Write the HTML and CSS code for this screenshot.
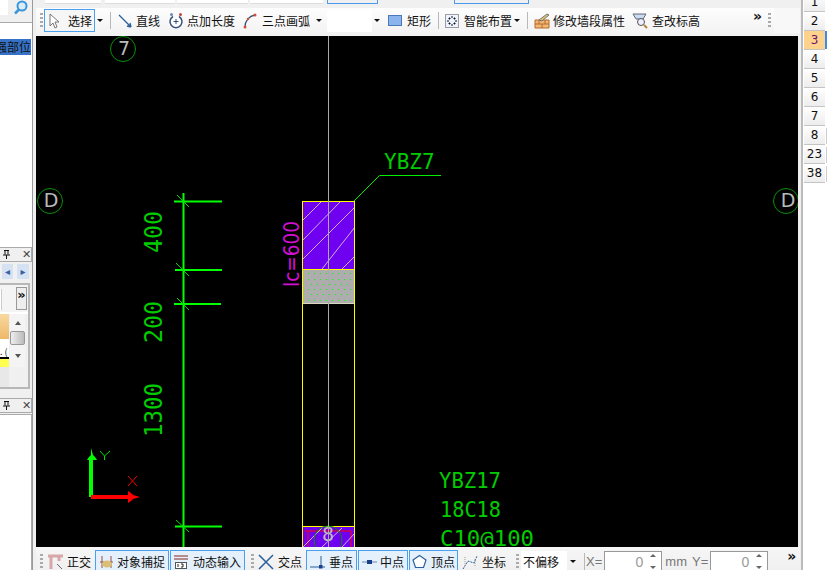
FILE: index.html
```html
<!DOCTYPE html>
<html lang="zh-CN">
<head>
<meta charset="utf-8">
<title>CAD</title>
<link rel="stylesheet" href="styles.css">
</head>
<body>
<div class="app">
  <aside class="left">
    <div class="search"><svg width="15" height="15" viewBox="0 0 15 15"><circle cx="9" cy="6" r="4.500" fill="#d8ecfa" stroke="#3a96d8" stroke-width="2"/><path d="M6 9.500 2 13.500" stroke="#3a96d8" stroke-width="2.500"/></svg></div>
    <div class="tree"><div class="tree-sel">强部位</div></div>
    <div class="panel-head"><svg class="pin" width="7" height="9" viewBox="0 0 7 9"><path d="M1 .5h5M2 .5v4M5 .5v4M0 5h7M3.500 5v4" stroke="#111" fill="none"/></svg><span class="close">✕</span></div>
    <div class="nav"><span class="nav-btn">◂</span><span class="nav-btn wide">▸</span></div>
    <div class="prop">
      <div class="prop-top"><span class="prop-field"></span><span class="prop-more">»</span></div>
      <div class="prop-body">
        <div class="swatches"><div class="sw-gold"></div><div class="sw-text">. (</div><div class="sw-black"></div><div class="sw-yellow"></div><div class="sw-rest"></div></div>
        <div class="scroll"><span class="sc-up"></span><span class="sc-thumb"></span><span class="sc-down"></span></div>
      </div>
    </div>
    <div class="panel-head second"><svg class="pin" width="7" height="9" viewBox="0 0 7 9"><path d="M1 .5h5M2 .5v4M5 .5v4M0 5h7M3.500 5v4" stroke="#111" fill="none"/></svg><span class="close">✕</span></div>
    <div class="left-rest"></div>
  </aside>

  <main class="center">
    <div class="strip">
      <span class="box w56"></span><span class="box w70 after"></span><span class="box w71"></span><span class="box w73"></span><span class="box blue w50"></span><span class="box-gap"></span><span class="box blue w75"></span>
    </div>
    <div class="toolbar">
      <span class="grip"></span>
      <span class="btn on sel"><svg width="14" height="16" viewBox="0 0 14 16"><path d="M2 1v12l3-3 2 5 2-1-2-5h4z" fill="#fff" stroke="#777"/></svg>选择</span>
      <span class="caret c1"></span>
      <span class="sep s1"></span>
      <span class="tool m7 g4w"><svg width="14" height="14" viewBox="0 0 14 14"><path d="M1 1l12 12M13 13l-4-1M13 13l-1-4" stroke="#2a5f9a" stroke-width="1.300" fill="none"/></svg>直线</span>
      <span class="tool m8 g3w"><svg width="16" height="17" viewBox="0 0 16 17"><path d="M5 4.500a6 6 0 1 0 6 0" fill="#fff" stroke="#34507a" stroke-width="1.500"/><path d="M8 7v5M5.500 9.500h5" stroke="#34507a"/><circle cx="3.500" cy="2.500" r="1.500" fill="#6a8ab0"/><circle cx="12.500" cy="2.500" r="1.500" fill="#c0483c"/></svg>点加长度</span>
      <span class="tool m8 g4w"><svg width="15" height="16" viewBox="0 0 15 16"><path d="M2 14C2 8 6 3 12 2" stroke="#34507a" stroke-width="1.300" fill="none"/><circle cx="2" cy="14" r="1.500" fill="#d0503c"/><circle cx="12" cy="2" r="1.500" fill="#d0503c"/><circle cx="5" cy="6" r="1.200" fill="#d0503c"/></svg>三点画弧</span>
      <span class="caret c2"></span>
      <span class="combo top-combo"></span>
      <span class="caret c3"></span>
      <span class="tool m8"><svg width="14" height="11" viewBox="0 0 14 11"><rect x=".5" y=".5" width="13" height="10" fill="#8ab4ec" stroke="#4a78b8"/></svg>矩形</span>
      <span class="sep s1"></span>
      <span class="tool m6"><svg width="14" height="14" viewBox="0 0 14 14"><rect x=".5" y=".5" width="13" height="13" fill="#eef4ff" stroke="#444" stroke-dasharray="1 1"/><path d="M7 2v2M7 10v2M2 7h2M10 7h2M4 4h1v1H4zM9 4h1v1H9zM4 9h1v1H4zM9 9h1v1H9z" stroke="#111"/></svg>智能布置</span>
      <span class="caret c4"></span>
      <span class="sep s1"></span>
      <span class="tool m6 g3w"><svg width="16" height="17" viewBox="0 0 16 17"><path d="M1 8h14v8H1z" fill="#f0b878" stroke="#b86a28"/><path d="M1 12h14M5 8v4M11 8v4M8 12v4" stroke="#b86a28"/><path d="M5 8l8-6 2 1-7 6z" fill="#dcc070" stroke="#777"/></svg>修改墙段属性</span>
      <span class="tool m7 g4w"><svg width="16" height="16" viewBox="0 0 16 16"><path d="M1 1h13l-3 5H4z" fill="#c8dcf2" stroke="#667"/><circle cx="9" cy="9" r="3.500" fill="#eef" stroke="#555"/><path d="M12 12l3 3" stroke="#b08a30" stroke-width="2"/></svg>查改标高</span>
      <span class="more m-top">»</span>
      <span class="grip g2"></span>
      <span class="tb-tail"></span>
    </div>
    <div class="canvas">
      <svg class="cad" width="762" height="511" viewBox="36 36 762 511">
        <defs>
          <clipPath id="c1"><rect x="303" y="202" width="51" height="67"/></clipPath>
          <clipPath id="c2"><rect x="303" y="528" width="51" height="20"/></clipPath>
        </defs>
        <rect x="303" y="201.500" width="51" height="68" fill="#7000f0"/>
        <g clip-path="url(#c1)" stroke="#e0e0e0" stroke-width=".8">
          <path d="M303 220 321 202M303 240 340 202M303 259 355 207M322 269 355 227M342 269 355 256"/>
        </g>
        <rect x="303" y="270" width="51" height="33" fill="#adadad"/>
        <path d="M308 273.500h43M308 279.500h43M311 284.500h40M308 289.500h43M311 294.500h40M308 300.500h43" stroke="#0f0" stroke-width="1" stroke-dasharray="1 5"/>
        <path d="M303 303.500H354" stroke="#d8d8c0"/>
        <path d="M302.500 201.500H354.500M302.500 269.500H354.500M302.500 526.500H354.500M302.500 201V547M354.500 201V547" stroke="#ff0" fill="none"/>
        <rect x="303" y="527" width="51" height="20" fill="#7000f0"/>
        <path d="M305 531h46v16M308 547v-16" stroke="#f00" fill="none"/>
        <g clip-path="url(#c2)" stroke="#e0e0e0" stroke-width=".8"><path d="M303 547 322 528M322 547 342 528M342 547 355 533"/></g>
        <circle cx="328" cy="540" r="14" fill="none" stroke="#0a8a0a"/>
        <text class="axis" x="328" y="541" text-anchor="middle" font-size="17" fill="#a8c060">8</text>
        <path d="M328.500 36V547" stroke="#aaa"/>
        <path d="M354 201 379.500 175.500H441" stroke="#0e0" fill="none"/>
        <text class="lab" x="384" y="169">YBZ7</text>
        <text class="pink" transform="translate(299 287) rotate(-90)" textLength="66" lengthAdjust="spacingAndGlyphs">lc=600</text>
        <path d="M183.500 193V547" stroke="#0f0" stroke-width="2"/>
        <path d="M174 201.500H222M175 270H222M174 304H221M175 526.500H222" stroke="#0f0" stroke-width="2"/>
        <path d="M177 195 189 207M176 263 189 276M177 298 189 310M176 520 189 532" stroke="#0d0"/>
        <text class="dim" transform="translate(162 253) rotate(-90)" textLength="42" lengthAdjust="spacingAndGlyphs">400</text>
        <text class="dim" transform="translate(162 343) rotate(-90)" textLength="42" lengthAdjust="spacingAndGlyphs">200</text>
        <text class="dim" transform="translate(162 437) rotate(-90)" textLength="54" lengthAdjust="spacingAndGlyphs">1300</text>
        <circle cx="123" cy="49" r="12.500" fill="none" stroke="#0a900a"/>
        <text class="axis" x="124" y="55" text-anchor="middle">7</text>
        <circle cx="50" cy="201" r="12.500" fill="none" stroke="#0a900a"/>
        <text class="axis" x="51" y="207" text-anchor="middle">D</text>
        <circle cx="786" cy="201" r="12.500" fill="none" stroke="#0a900a"/>
        <text class="axis" x="788" y="207" text-anchor="middle">D</text>
        <path d="M91 497V459" stroke="#0f0" stroke-width="4"/>
        <path d="M91 448l2 7 2 2 2 3H87l2-3 2-2z" fill="#0f0"/>
        <path d="M91 497H129" stroke="#f00" stroke-width="4"/>
        <path d="M140 497l-7 2-2 2-3 2V491l3 2 2 2z" fill="#f00"/>
        <path d="M100 451 104.500 456 110 451M104.500 456V460" stroke="#0d0" fill="none"/>
        <path d="M128 476 137 486M137 476 128 486" stroke="#e00"/>
        <text class="lab" x="439" y="488" textLength="62" lengthAdjust="spacingAndGlyphs">YBZ17</text>
        <text class="lab" x="440" y="517" textLength="61" lengthAdjust="spacingAndGlyphs">18C18</text>
        <text class="lab big" x="440" y="546" textLength="94" lengthAdjust="spacingAndGlyphs">C10@100</text>
      </svg>
    </div>
    <div class="status">
      <span class="grip"></span>
      <span class="tool m4 g4w"><svg width="16" height="16" viewBox="0 0 16 16"><path d="M1 2h15M4 2v13M12 2v5" stroke="#d8a8a8" stroke-width="3" fill="none"/><path d="M10 10l5 5" stroke="#667"/></svg>正交</span>
      <span class="btn on st1"><svg width="17" height="16" viewBox="0 0 17 16"><path d="M2 8h13M4 2v12M13 2v12" stroke="#a04a4a"/><ellipse cx="9" cy="10" rx="5" ry="3.500" fill="#d8c078"/></svg>对象捕捉</span>
      <span class="btn on st2"><svg width="16" height="16" viewBox="0 0 16 16"><path d="M1 2h14M1 5h14" stroke="#a86a6a" stroke-width="1.500"/><rect x="2.500" y="8.500" width="11" height="6" fill="#fff" stroke="#555"/><path d="M5 10v3M8 10h2v3H8" stroke="#222" fill="none"/></svg>动态输入</span>
      <span class="grip g3"></span>
      <span class="tool m4 g4w"><svg width="16" height="16" viewBox="0 0 16 16"><path d="M1 1l14 14M15 1 1 15" stroke="#2a5f9a" stroke-width="1.500"/></svg>交点</span>
      <span class="btn on st3 first"><svg width="17" height="16" viewBox="0 0 17 16"><path d="M1 13h15M12 2v11" stroke="#2a5f9a"/><rect x="10" y="11" width="3.500" height="3.500" fill="#1a3f8a"/></svg>垂点</span>
      <span class="btn on st3b"><svg width="17" height="16" viewBox="0 0 17 16"><path d="M1 8h15" stroke="#6a8ab0"/><rect x="6" y="6" width="5" height="4" fill="#1a3f8a"/></svg>中点</span>
      <span class="btn on st4"><svg width="15" height="15" viewBox="0 0 15 15"><path d="M7.500 1.500 14 6l-2.500 7.500h-8L1 6z" fill="#fff" stroke="#2a5f9a" stroke-width="1.200"/></svg>顶点</span>
      <span class="tool m4 g4w"><svg width="16" height="16" viewBox="0 0 16 16"><path d="M1 15 6 7l6 2 3-7" stroke="#2a5f9a" fill="none" stroke-dasharray="2 1"/><path d="M3 3v10M13 5v8" stroke="#999" stroke-dasharray="1 1"/></svg>坐标</span>
      <span class="grip g4"></span>
      <span class="combo st-combo">不偏移</span>
      <span class="caret c5"></span>
      <span class="sep s4"></span>
      <span class="field-lab">X=</span>
      <span class="num">0<span class="spin"><i class="up"></i><i class="down"></i></span></span>
      <span class="field-lab mm">mm</span>
      <span class="field-lab yl">Y=</span>
      <span class="num">0<span class="spin"><i class="up"></i><i class="down"></i></span></span>
      <span class="more m-bot">»</span>
    </div>
  </main>

  <aside class="right">
    <div class="cell">1</div><div class="cell">2</div><div class="cell cur">3</div><div class="cell">4</div><div class="cell">5</div><div class="cell">6</div><div class="cell">7</div><div class="cell tab">8</div><div class="cell tab">23</div><div class="cell tab">38</div>
  </aside>
</div>
</body>
</html>
```
FILE: styles.css
```css
* { box-sizing: border-box; }
html, body { margin: 0; padding: 0; }
body { width: 827px; height: 570px; overflow: hidden; background: #f0f0f0; font: 12px "Noto Sans CJK SC", "Liberation Sans", sans-serif; color: #111; }
.app { display: grid; grid-template-columns: 36px 764px 27px; height: 570px; }

/* left docks */
.left { display: flex; flex-direction: column; background: #f0f0f0; border-right: 1px solid #9a9a9a; width: 33px; }
.search { height: 15px; display: flex; justify-content: flex-end; padding-right: 4px; background: linear-gradient(90deg, #fff 8px, #f0f0f0 8px); }
.tree { height: 225px; margin-top: 7px; background: #fff; border-top: 1px solid #aaa; padding-top: 16px; }
.tree-sel { height: 16px; background: #3673c8; color: #111; line-height: 16px; font-size: 12px; direction: rtl; overflow: hidden; width: 31px; white-space: nowrap; }
.panel-head { height: 15px; display: flex; align-items: center; gap: 12px; padding-left: 3px; border: 1px solid #aaa; border-left: 0; flex: none; }
.pin { display: block; flex: none; }
.close { font: 11px/13px "DejaVu Sans", sans-serif; color: #444; width: 10px; }
.nav { height: 15px; margin-top: 2px; display: flex; gap: 4px; padding-left: 2px; flex: none; }
.nav-btn { width: 11px; height: 15px; background: #d4e2f4; color: #3a60a0; font: 10px/15px "DejaVu Sans", sans-serif; text-align: center; }
.wide { width: 12px; }
.prop { height: 106px; margin-top: 4px; margin-right: 2px; border: 2px solid #b8b8b8; border-left: 0; background: #fff; display: flex; flex-direction: column; flex: none; }
.prop-top { height: 27px; display: flex; background: #f4f4f4; justify-content: space-between; }
.prop-field { width: 2px; height: 21px; background: #fff; border-right: 1px solid #ccc; margin-top: 4px; }
.prop-more { width: 11px; height: 23px; margin-top: 2px; border: 1px solid #999; margin-right: 1px; font: bold 13px/13px "DejaVu Sans", sans-serif; text-align: center; background: #eee; }
.prop-body { flex: 1; display: flex; background: #f0f0f0; margin-top: 2px; }
.swatches { width: 9px; display: flex; flex-direction: column; }
.sw-gold { height: 25px; background: linear-gradient(#f8d9a0, #eeb868); }
.sw-text { height: 18px; background: #fff; font-size: 9px; line-height: 25px; white-space: nowrap; overflow: hidden; }
.sw-black { height: 2px; background: #000; }
.sw-yellow { height: 8px; background: #ffff50; }
.sw-rest { flex: 1; background: #e8e8e8; }
.scroll { width: 15px; margin-left: 1px; display: flex; flex-direction: column; align-items: center; padding-top: 7px; height: 53px; background: #f4f4f4; }
.sc-up { width: 0; height: 0; border: 3px solid transparent; border-top: 0; border-bottom: 4px solid #555; }
.sc-thumb { width: 15px; height: 14px; margin-top: 6px; background: linear-gradient(90deg, #eee, #bbb); border: 1px solid #999; border-radius: 2px; }
.sc-down { width: 0; height: 0; margin-top: 9px; border: 3px solid transparent; border-bottom: 0; border-top: 4px solid #555; }
.second { margin-top: 9px; }
.left-rest { flex: 1; background: #fff; border-right: 1px solid #aaa; margin-top: 1px; border-top: 1px solid #aaa; }

/* center */
.center { display: flex; flex-direction: column; height: 570px; min-width: 0; }
.strip { height: 8px; display: flex; gap: 2px; padding-left: 9px; overflow: hidden; }
.box { height: 4px; background: #fff; border-bottom: 1px solid #ddd; }
.blue { height: 4px; background: transparent; border: 1px solid #4a9af0; border-top: 0; }
.box-gap { width: 72px; }
.w56 { width: 56px; } .w70 { width: 70px; margin-left: 2px; } .w71 { width: 71px; } .w73 { width: 73px; } .w50 { width: 51px; margin-left: 2px; } .w75 { width: 75px; }
.toolbar { height: 28px; display: flex; align-items: center; background: linear-gradient(#fdfdfd, #f2f2f2); padding: 0 0 3px 4px; white-space: nowrap; }
.tool, .btn { display: inline-flex; align-items: center; gap: 5px; flex: none; }
.g3w { gap: 3px; } .g4w { gap: 4px; }
.btn.on { height: 23px; border: 1px solid #4aa0f0; background: #e4f0fb; padding-left: 2px; }
.sel { width: 51px; margin-left: 1px; background: #f6f6f6 !important; gap: 6px; padding-left: 3px !important; }
.grip { width: 3px; height: 16px; flex: none; background: repeating-linear-gradient(#aaa 0 2px, transparent 2px 4px); }
.caret { flex: none; width: 0; height: 0; border: 3px solid transparent; border-bottom: 0; border-top: 3px solid #111; }
.c1 { margin-left: 2px; } .c2 { margin-left: 6px; } .c3 { margin-left: 2px; } .c4 { margin-left: 2px; } .c5 { margin-left: 3px; }
.sep { flex: none; width: 1px; height: 17px; background: #b8b8b8; }
.s1 { margin-left: 7px; }
.m4 { margin-left: 4px; } .m6 { margin-left: 6px; } .m7 { margin-left: 7px; } .m8 { margin-left: 8px; }
.combo { flex: none; background: #fff; }
.top-combo { width: 45px; height: 22px; margin-left: 5px; }
.more { flex: none; width: 10px; font: bold 14px/10px "DejaVu Sans", sans-serif; }
.m-top { margin-left: 53px; margin-top: -10px; }
.g2 { margin-left: 5px; }
.tb-tail { flex: none; width: 26px; height: 25px; background: #f8f8f8; margin-left: 3px; }
.canvas { height: 511px; background: #000; width: 762px; overflow: hidden; }
.cad { display: block; }
.lab { font: 21px "DejaVu Sans Mono", monospace; fill: #0c0; }
.big { font-size: 22px; }
.pink { font: 22px "DejaVu Sans", sans-serif; fill: #d010d0; }
.dim { font: 24px "DejaVu Sans Mono", monospace; fill: #0c0; }
.axis { font: 19px "DejaVu Sans", sans-serif; fill: #bbb; }
.status { height: 23px; display: flex; align-items: center; padding: 6px 0 0 4px; white-space: nowrap; background: linear-gradient(#f6f6f6, #f0f0f0); }
.st1 { width: 74px; margin-left: 4px; gap: 2px; }
.st2 { width: 75px; margin-left: 1px; gap: 4px; }
.st3 { width: 51px; gap: 3px; }
.first { margin-left: 4px; }
.st3b { width: 50px; margin-left: 1px; gap: 2px; }
.st4 { width: 49px; margin-left: 1px; gap: 4px; }
.g3 { margin-left: 6px; }
.g4 { margin-left: 10px; }
.st-combo { width: 46px; height: 22px; margin-left: 2px; line-height: 22px; padding-left: 2px; white-space: nowrap; }
.s4 { margin-left: 8px; }
.field-lab { flex: none; color: #777; font: 13px "Liberation Sans", sans-serif; margin-left: 1px; margin-right: 2px; }
.mm { margin-left: 3px; margin-right: 0; }
.yl { margin-left: 5px; margin-right: 2px; }
.num { flex: none; width: 58px; height: 22px; background: #fff; border: 1px solid #999; color: #999; display: flex; align-items: center; justify-content: flex-end; font: 14px "Liberation Sans", sans-serif; }
.spin { width: 17px; height: 20px; margin-left: 1px; display: flex; flex-direction: column; align-items: center; justify-content: space-between; padding: 2px 0 3px; }
.spin i { display: block; width: 0; height: 0; border: 3px solid transparent; }
.up { border-top: 0 !important; border-bottom: 3px solid #666 !important; }
.down { border-bottom: 0 !important; border-top: 3px solid #666 !important; }
.m-bot { margin-left: 19px; margin-top: -12px; }

/* right tabs */
.right { background: #fff; border-left: 2px solid #bbb; margin-left: 1px; margin-top: -7px; padding-right: 2px; }
.cell { height: 19px; width: 21px; margin-left: 1px; border-bottom: 1px solid #c4c4c4; background: linear-gradient(#fff, #ededed); font: 12px/18px "DejaVu Sans", sans-serif; text-align: center; position: relative; }
.cur { background: #fcd28c; color: #70106a; }
.cur::after { content: ""; position: absolute; left: 21px; top: 0; width: 3px; height: 18px; background: #3a8cf0; }
.tab::after { content: ""; position: absolute; left: 22px; top: 2px; width: 2px; height: 14px; border: 1px solid #ccc; }
```
